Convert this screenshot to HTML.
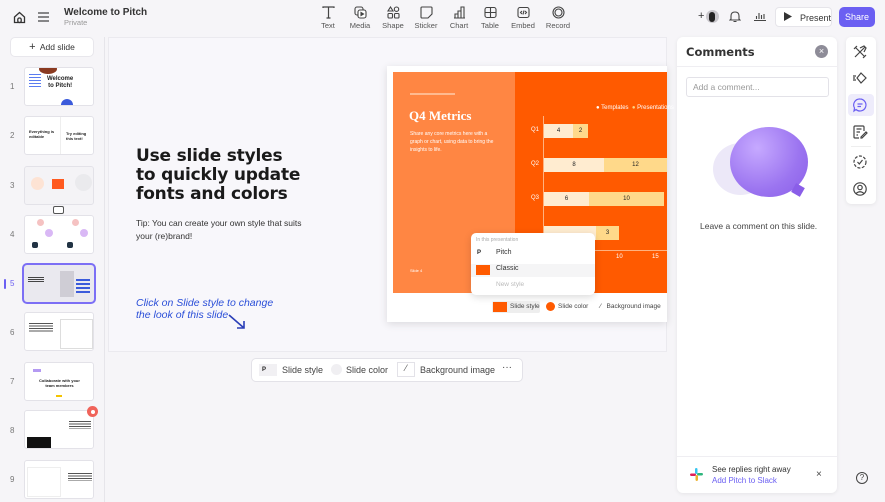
<!DOCTYPE html>
<html><head><meta charset="utf-8"><style>
*{box-sizing:border-box;margin:0;padding:0}
body{width:885px;height:502px;overflow:hidden;background:#f6f5f8;font-family:"Liberation Sans",sans-serif;color:#222;position:relative}
.abs{position:absolute}
.tool{position:absolute;top:6px;width:36px;text-align:center;font-size:7.5px;color:#555}
.tool svg{display:block;margin:0 auto 2px}
.thumb{position:absolute;left:24px;width:70px;height:39px;background:#fff;border:1px solid #e3e2e8;border-radius:3px;overflow:hidden}
.num{position:absolute;left:10px;font-size:8px;color:#777}
.ic{position:absolute;left:852px;width:16px;height:16px}
</style></head><body>
<svg class="abs" style="left:13px;top:11px" width="13" height="13" viewBox="0 0 13 13" fill="none" stroke="#333" stroke-width="1.3"><path d="M1.5 6L6.5 1.5L11.5 6V11.5H1.5Z"/><rect x="4.8" y="7" width="3.4" height="4.5" rx="1.5"/></svg>
<svg class="abs" style="left:38px;top:12px" width="11" height="10" stroke="#444" stroke-width="1.2"><path d="M0 1H11M0 5H11M0 9H11"/></svg>
<div class="abs" style="left:64px;top:7px;font-size:10px;font-weight:bold;color:#333">Welcome to Pitch</div>
<div class="abs" style="left:64px;top:18px;font-size:7.5px;color:#999">Private</div>

<div class="tool" style="left:310px"><svg width="13" height="13" fill="none" stroke="#444" stroke-width="1.2"><path d="M1 2V1H12V2M6.5 1V12M4.5 12H8.5"/></svg>Text</div>
<div class="tool" style="left:342px"><svg width="13" height="13" fill="none" stroke="#444" stroke-width="1.1"><rect x="1" y="1" width="8" height="8" rx="2"/><rect x="4" y="4" width="8" height="8" rx="2" fill="#fff"/><path d="M7 6.5L9.5 8L7 9.5Z" fill="#444"/></svg>Media</div>
<div class="tool" style="left:375px"><svg width="13" height="13" fill="none" stroke="#444" stroke-width="1.1"><path d="M3.5 1L6 5H1Z"/><circle cx="9.5" cy="3.2" r="2.2"/><rect x="1" y="7.5" width="4.5" height="4.5" rx="1"/><rect x="7.5" y="7.5" width="4.5" height="4.5" rx="1"/></svg>Shape</div>
<div class="tool" style="left:408px"><svg width="13" height="13" fill="none" stroke="#444" stroke-width="1.1"><path d="M2 1H11Q12 1 12 2V8L8 12H2Q1 12 1 11V2Q1 1 2 1Z"/></svg>Sticker</div>
<div class="tool" style="left:441px"><svg width="13" height="13" fill="none" stroke="#444" stroke-width="1.1"><path d="M1 12H12M2 12V8H5V12M5 12V5H8V12M8 12V1H11V12"/></svg>Chart</div>
<div class="tool" style="left:472px"><svg width="13" height="13" fill="none" stroke="#444" stroke-width="1.1"><rect x="1" y="1.5" width="11" height="10" rx="2"/><path d="M1 6.5H12M6.5 1.5V11.5"/></svg>Table</div>
<div class="tool" style="left:505px"><svg width="13" height="13" fill="none" stroke="#444" stroke-width="1.1"><rect x="1" y="1.5" width="11" height="10" rx="2"/><path d="M5 5L3.5 6.5L5 8M8 5L9.5 6.5L8 8M7 4.5L6 8.5"/></svg>Embed</div>
<div class="tool" style="left:540px"><svg width="13" height="13" fill="none" stroke="#444" stroke-width="1.1"><circle cx="6.5" cy="6.5" r="5.5"/><circle cx="6.5" cy="6.5" r="3.5"/></svg>Record</div>

<div class="abs" style="left:698px;top:10px;font-size:11px;color:#333">+</div>
<div class="abs" style="left:706px;top:10px;width:13px;height:13px;border-radius:50%;background:#c9c7cc"><div style="position:absolute;left:3px;top:2px;width:6px;height:10px;background:#222;border-radius:3px"></div></div>
<svg class="abs" style="left:729px;top:10px" width="12" height="13" fill="none" stroke="#444" stroke-width="1.1"><path d="M2 9V6Q2 2 6 2Q10 2 10 6V9L11 10H1Z M4.5 11.5H7.5"/></svg>
<svg class="abs" style="left:754px;top:11px" width="12" height="10" fill="none" stroke="#444" stroke-width="1.1"><path d="M0 9.5H12M2.5 8V5M5 8V2M7.5 8V4M10 8V3"/></svg>
<div class="abs" style="left:775px;top:7px;width:57px;height:20px;background:#fff;border:1px solid #e6e5ea;border-radius:4px;font-size:9px;color:#333;padding:5px 0 0 24px">Present</div>
<svg class="abs" style="left:784px;top:12px" width="8" height="9"><path d="M0 0L8 4.5L0 9Z" fill="#333"/></svg>
<div class="abs" style="left:839px;top:7px;width:36px;height:20px;background:#6b5ff2;border-radius:5px;font-size:9px;color:#fff;text-align:center;line-height:20px">Share</div>

<div class="abs" style="left:10px;top:37px;width:84px;height:20px;background:#fff;border:1px solid #e8e7ec;border-radius:5px;font-size:8.5px;color:#333;text-align:center;line-height:19px"><span style="font-size:11px">+</span>&nbsp; Add slide</div>
<div class="abs" style="left:104px;top:37px;width:1px;height:465px;background:#e6e5ea"></div>

<div class="num" style="top:82px">1</div>
<div class="thumb" style="top:67px"><div style="position:absolute;left:22px;top:8px;font-size:6px;font-weight:bold;line-height:7px;text-align:center">Welcome<br>to Pitch!</div><div style="position:absolute;left:14px;top:-4px;width:18px;height:10px;background:#8a3a20;border-radius:50%"></div><div style="position:absolute;left:36px;top:31px;width:12px;height:12px;background:#3b5bdb;border-radius:50%"></div><div style="position:absolute;left:4px;top:6px;width:12px;height:14px;background:repeating-linear-gradient(#5b7cf0 0 1px,transparent 1px 3px)"></div></div>
<div class="num" style="top:131px">2</div>
<div class="thumb" style="top:116px"><div style="position:absolute;left:4px;top:12px;font-size:4px;font-weight:bold">Everything is<br>editable</div><div style="position:absolute;left:41px;top:14px;font-size:4px;font-weight:bold">Try editing<br>this text!</div><div style="position:absolute;left:35px;top:0;width:1px;height:39px;background:#eee"></div></div>
<div class="num" style="top:181px">3</div>
<div class="thumb" style="top:166px;background:#f4f3f6"><div style="position:absolute;left:6px;top:10px;width:13px;height:13px;background:#fde3d4;border-radius:50%"></div><div style="position:absolute;left:27px;top:12px;width:12px;height:10px;background:#ff5a1f"></div><div style="position:absolute;left:50px;top:7px;width:17px;height:17px;background:#eaeaed;border-radius:50%"></div></div>
<div class="abs" style="left:53px;top:206px;width:11px;height:8px;border:1px solid #555;border-radius:2px;background:#fff"></div>
<div class="num" style="top:230px">4</div>
<div class="thumb" style="top:215px"><div style="position:absolute;left:12px;top:3px;width:7px;height:7px;background:#f5c2c2;border-radius:50%"></div><div style="position:absolute;left:20px;top:13px;width:8px;height:8px;background:#d9b8f5;border-radius:50%"></div><div style="position:absolute;left:7px;top:26px;width:6px;height:6px;background:#234;border-radius:2px"></div><div style="position:absolute;left:47px;top:3px;width:7px;height:7px;background:#f5c2c2;border-radius:50%"></div><div style="position:absolute;left:55px;top:13px;width:8px;height:8px;background:#d9b8f5;border-radius:50%"></div><div style="position:absolute;left:42px;top:26px;width:6px;height:6px;background:#234;border-radius:2px"></div></div>
<div class="abs" style="left:4px;top:279px;width:2px;height:10px;background:#6b5ff2;border-radius:1px"></div>
<div class="num" style="top:279px;color:#6b5ff2">5</div>
<div class="abs" style="left:22px;top:263px;width:74px;height:41px;border:2px solid #7c6ff5;border-radius:5px;background:#eae9ef;overflow:hidden"><div style="position:absolute;left:4px;top:12px;width:16px;height:6px;background:repeating-linear-gradient(#444 0 1px,transparent 1px 2px)"></div><div style="position:absolute;left:36px;top:6px;width:14px;height:26px;background:#cfcdd5"></div><div style="position:absolute;left:52px;top:14px;width:14px;height:2px;background:#3b5bdb;box-shadow:0 4px #3b5bdb,0 8px #3b5bdb,0 12px #3b5bdb"></div></div>
<div class="num" style="top:328px">6</div>
<div class="thumb" style="top:312px"><div style="position:absolute;left:4px;top:10px;width:24px;height:10px;background:repeating-linear-gradient(#555 0 1px,transparent 1px 2.5px)"></div><div style="position:absolute;left:35px;top:6px;width:33px;height:30px;border:1px solid #ddd"></div></div>
<div class="num" style="top:377px">7</div>
<div class="thumb" style="top:362px"><div style="position:absolute;left:8px;top:6px;width:8px;height:3px;background:#b49af2"></div><div style="position:absolute;left:14px;top:15px;font-size:4px;font-weight:bold;text-align:center">Collaborate with your<br>team members</div><div style="position:absolute;left:31px;top:32px;width:6px;height:2px;background:#f5c400"></div></div>
<div class="num" style="top:426px">8</div>
<div class="thumb" style="top:410px"><div style="position:absolute;left:2px;top:26px;width:24px;height:12px;background:#111"></div><div style="position:absolute;left:44px;top:10px;width:22px;height:8px;background:repeating-linear-gradient(#555 0 1px,transparent 1px 2.5px)"></div></div>
<div class="abs" style="left:87px;top:406px;width:11px;height:11px;border-radius:50%;background:#f0635a"><div style="margin:3.5px;width:4px;height:4px;border-radius:50%;background:#fff"></div></div>
<div class="num" style="top:475px">9</div>
<div class="thumb" style="top:460px"><div style="position:absolute;left:43px;top:12px;width:24px;height:8px;background:repeating-linear-gradient(#555 0 1px,transparent 1px 2.5px)"></div><div style="position:absolute;left:2px;top:6px;width:34px;height:30px;border:1px solid #eee"></div></div>

<div class="abs" style="left:108px;top:37px;width:559px;height:315px;background:#f8f7fb;border:1px solid #ebeaef"></div>
<div class="abs" style="left:136px;top:147px;font-family:'DejaVu Sans',sans-serif;font-weight:bold;font-size:17px;line-height:19px;color:#1a1a1a;letter-spacing:-0.2px">Use slide styles<br>to quickly update<br>fonts and colors</div>
<div class="abs" style="left:136px;top:217px;font-size:8.5px;line-height:13px;color:#333">Tip: You can create your own style that suits<br>your (re)brand!</div>
<div class="abs" style="left:136px;top:297px;font-family:'Liberation Sans',sans-serif;font-style:italic;font-size:10.5px;line-height:12px;color:#2b4fd8">Click on Slide style to change<br>the look of this slide</div>
<svg class="abs" style="left:228px;top:313px" width="20" height="18" fill="none" stroke="#2b3fb8" stroke-width="1.6"><path d="M1 2L16 15M9 15H16V8"/></svg>

<div class="abs" style="left:387px;top:66px;width:280px;height:256px;background:#fff;box-shadow:0 2px 8px rgba(0,0,0,.12)"></div>
<div class="abs" style="left:393px;top:72px;width:122px;height:221px;background:#ff8643"></div>
<div class="abs" style="left:515px;top:72px;width:152px;height:221px;background:#ff5a00"></div>
<div class="abs" style="left:410px;top:93px;width:45px;height:2px;background:#ffd0b0;opacity:.7"></div>
<div class="abs" style="left:409px;top:108px;font-family:'Liberation Serif',serif;font-size:13px;font-weight:bold;color:#fff">Q4 Metrics</div>
<div class="abs" style="left:410px;top:130px;font-size:5px;line-height:8px;color:#fff">Share any core metrics here with a<br>graph or chart, using data to bring the<br>insights to life.</div>
<div class="abs" style="left:410px;top:268px;font-size:4px;color:#fff">Slide 4</div>
<div class="abs" style="left:596px;top:105px;font-size:6px;color:#fff;white-space:nowrap">● Templates &nbsp;<span style="color:#ffd27f">●</span> Presentations</div>
<div class="abs" style="left:543px;top:116px;width:1px;height:134px;background:#ffb27f"></div>
<div class="abs" style="left:531px;top:127px;font-size:6px;color:#fff">Q1</div>
<div class="abs" style="left:531px;top:161px;font-size:6px;color:#fff">Q2</div>
<div class="abs" style="left:531px;top:195px;font-size:6px;color:#fff">Q3</div>
<div class="abs" style="left:544px;top:124px;width:29px;height:14px;background:#ffecd0;font-size:6px;text-align:center;line-height:14px">4</div>
<div class="abs" style="left:573px;top:124px;width:15px;height:14px;background:#ffd98a;font-size:6px;text-align:center;line-height:14px">2</div>
<div class="abs" style="left:544px;top:158px;width:60px;height:14px;background:#ffecd0;font-size:6px;text-align:center;line-height:14px">8</div>
<div class="abs" style="left:604px;top:158px;width:63px;height:14px;background:#ffd98a;font-size:6px;text-align:center;line-height:14px">12</div>
<div class="abs" style="left:544px;top:192px;width:45px;height:14px;background:#ffecd0;font-size:6px;text-align:center;line-height:14px">6</div>
<div class="abs" style="left:589px;top:192px;width:75px;height:14px;background:#ffd98a;font-size:6px;text-align:center;line-height:14px">10</div>
<div class="abs" style="left:544px;top:226px;width:52px;height:14px;background:#ffecd0"></div>
<div class="abs" style="left:596px;top:226px;width:23px;height:14px;background:#ffd98a;font-size:6px;text-align:center;line-height:14px">3</div>
<div class="abs" style="left:543px;top:250px;width:124px;height:1px;background:#ffb27f"></div>
<div class="abs" style="left:616px;top:254px;font-size:6px;color:#fff">10</div>
<div class="abs" style="left:652px;top:254px;font-size:6px;color:#fff">15</div>
<div class="abs" style="left:471px;top:233px;width:124px;height:62px;background:#fff;border-radius:5px;box-shadow:0 2px 8px rgba(0,0,0,.15)">
<div style="position:absolute;left:5px;top:4px;font-size:5px;color:#aaa">In this presentation</div>
<div style="position:absolute;left:6px;top:17px;font-size:6px;font-weight:bold">P</div><div style="position:absolute;left:25px;top:16px;font-size:7px;color:#333">Pitch</div>
<div style="position:absolute;left:0;top:31px;width:124px;height:13px;background:#f5f5f6"></div>
<div style="position:absolute;left:5px;top:32px;width:14px;height:10px;background:#ff5a00"></div><div style="position:absolute;left:25px;top:32px;font-size:7px;color:#333">Classic</div>
<div style="position:absolute;left:25px;top:48px;font-size:6.5px;color:#bbb">New style</div>
</div>
<div class="abs" style="left:492px;top:301px;width:48px;height:12px;background:#eee;border-radius:2px"></div>
<div class="abs" style="left:493px;top:302px;width:14px;height:10px;background:#ff5a00"></div>
<div class="abs" style="left:510px;top:303px;font-size:6.5px;color:#444;white-space:nowrap">Slide style</div>
<div class="abs" style="left:546px;top:302px;width:9px;height:9px;border-radius:50%;background:#ff5a00"></div>
<div class="abs" style="left:558px;top:303px;font-size:6.5px;color:#444">Slide color</div>
<div class="abs" style="left:600px;top:303px;font-size:6.5px;color:#444;white-space:nowrap">⁄ &nbsp;&nbsp;Background image</div>

<div class="abs" style="left:251px;top:358px;width:272px;height:24px;background:#fff;border:1px solid #e3e2e8;border-radius:5px"></div>
<div class="abs" style="left:259px;top:364px;width:18px;height:12px;background:#f1f0f3;font-size:6px;font-weight:bold;padding:3px 0 0 3px">P</div>
<div class="abs" style="left:282px;top:365px;font-size:9px;color:#444">Slide style</div>
<div class="abs" style="left:331px;top:364px;width:11px;height:11px;border-radius:50%;background:#f0eff2"></div>
<div class="abs" style="left:346px;top:365px;font-size:9px;color:#444">Slide color</div>
<div class="abs" style="left:397px;top:362px;width:18px;height:15px;border:1px solid #e3e2e8;font-size:9px;text-align:center;color:#555">⁄</div>
<div class="abs" style="left:420px;top:365px;font-size:9px;color:#444">Background image</div>
<div class="abs" style="left:502px;top:362px;font-size:10px;color:#444">···</div>

<div class="abs" style="left:677px;top:37px;width:160px;height:456px;background:#fff;border-radius:6px;box-shadow:0 1px 4px rgba(0,0,0,.07)"></div>
<div class="abs" style="left:686px;top:45px;font-size:11.5px;font-weight:bold;color:#333;font-family:'DejaVu Sans',sans-serif">Comments</div>
<div class="abs" style="left:815px;top:45px;width:13px;height:13px;border-radius:50%;background:#8e8c98;color:#fff;font-size:9px;text-align:center;line-height:13px">×</div>
<div class="abs" style="left:677px;top:66px;width:160px;height:1px;background:#efeef2"></div>
<div class="abs" style="left:686px;top:77px;width:143px;height:20px;border:1px solid #e3e2e8;border-radius:3px;font-size:8.5px;color:#999;padding:4px 6px">Add a comment...</div>
<div class="abs" style="left:713px;top:143px;width:55px;height:52px;border-radius:50%;background:#ece8f8"></div>
<div class="abs" style="left:730px;top:127px;width:78px;height:70px;border-radius:50%;background:radial-gradient(circle at 35% 30%,#c6a9ff,#9b74f0 60%,#8a5ee8)"></div>
<div class="abs" style="left:793px;top:185px;width:10px;height:10px;background:#8a5ee8;transform:rotate(30deg)"></div>
<div class="abs" style="left:700px;top:221px;font-size:8.5px;color:#444">Leave a comment on this slide.</div>
<div class="abs" style="left:677px;top:456px;width:160px;height:1px;background:#efeef2"></div>
<svg class="abs" style="left:690px;top:468px" width="13" height="13"><rect x="5" y="0" width="2.5" height="6" rx="1.2" fill="#36c5f0"/><rect x="7" y="5" width="6" height="2.5" rx="1.2" fill="#2eb67d"/><rect x="5.5" y="7" width="2.5" height="6" rx="1.2" fill="#ecb22e"/><rect x="0" y="5.5" width="6" height="2.5" rx="1.2" fill="#e01e5a"/></svg>
<div class="abs" style="left:712px;top:465px;font-size:8px;color:#333">See replies right away</div>
<div class="abs" style="left:712px;top:476px;font-size:8px;color:#6b5ff2">Add Pitch to Slack</div>
<div class="abs" style="left:816px;top:469px;font-size:10px;color:#444">×</div>
<div class="abs" style="left:856px;top:472px;width:12px;height:12px;border:1.2px solid #444;border-radius:50%;font-size:8px;text-align:center;line-height:10px;color:#444">?</div>

<div class="abs" style="left:846px;top:37px;width:30px;height:167px;background:#fff;border-radius:5px;box-shadow:0 1px 4px rgba(0,0,0,.07)"></div>
<svg class="ic" style="top:44px" viewBox="0 0 16 16" fill="none" stroke="#444" stroke-width="1.2"><path d="M3 3L13 13M13 3L3 13M2 5L5 2M11 14L14 11M8 4L12 2L14 4L12 8"/></svg>
<svg class="ic" style="top:70px" viewBox="0 0 16 16" fill="none" stroke="#444" stroke-width="1.2"><path d="M9 3L14 8L9 13L5 8Z M1 6H4M1 8H3M1 10H4"/></svg>
<div class="abs" style="left:848px;top:94px;width:26px;height:22px;background:#eeecfb;border-radius:4px"></div>
<svg class="ic" style="top:97px" viewBox="0 0 16 16" fill="none" stroke="#6b5ff2" stroke-width="1.2"><path d="M8 2A6 6 0 1 1 4 12.5L2 14L2.5 11A6 6 0 0 1 8 2Z M5.5 7H10.5M5.5 9.5H9"/></svg>
<svg class="ic" style="top:124px" viewBox="0 0 16 16" fill="none" stroke="#444" stroke-width="1.2"><path d="M12 7V3Q12 2 11 2H3Q2 2 2 3V13Q2 14 3 14H7M4.5 5H9.5M4.5 8H8M4.5 11H6M9 13L14 8L15 9L10 14H9Z"/></svg>
<div class="abs" style="left:851px;top:146px;width:20px;height:1px;background:#eee"></div>
<svg class="ic" style="top:154px" viewBox="0 0 16 16" fill="none" stroke="#444" stroke-width="1.2"><circle cx="8" cy="8" r="6" stroke-dasharray="3 1.5"/><path d="M5.5 8L7.3 10L10.5 6"/></svg>
<svg class="ic" style="top:181px" viewBox="0 0 16 16" fill="none" stroke="#444" stroke-width="1.2"><circle cx="8" cy="8" r="6.2"/><circle cx="8" cy="6.5" r="2.2"/><path d="M4 12.5Q8 9 12 12.5"/></svg>
</body></html>
